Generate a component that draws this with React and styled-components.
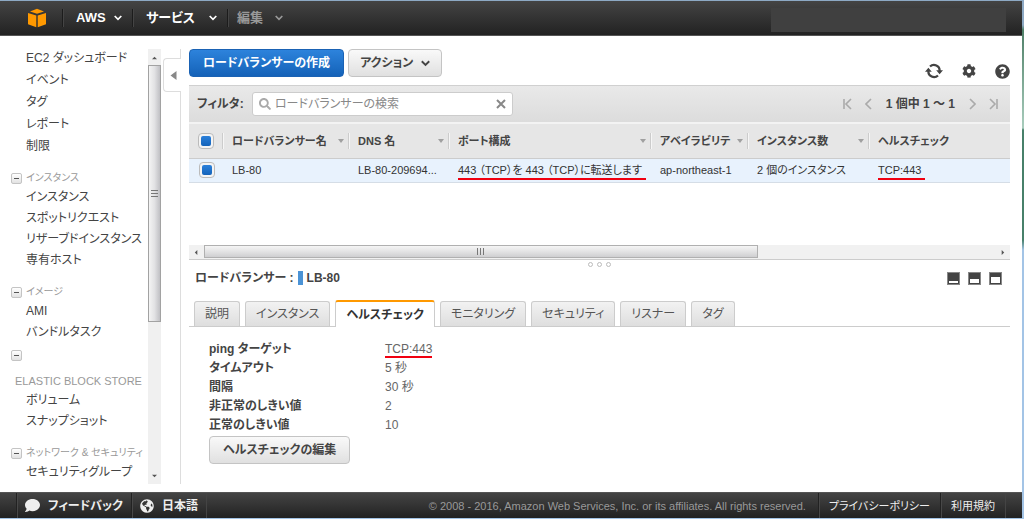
import React from "react";
import styled, { createGlobalStyle, css } from "styled-components";
import { FaCog, FaComment, FaGlobeAmericas, FaQuestionCircle, FaSearch } from "react-icons/fa";

const GlobalStyle = createGlobalStyle`
  *, *::before, *::after { box-sizing: border-box; }
  body { margin: 0; }
  body, button, input, table {
    font-family: "Liberation Sans", "Noto Sans CJK JP", sans-serif;
    font-size: 12px;
    line-height: 20px;
    font-feature-settings: "palt";
    color: #444;
  }
  button { margin: 0; padding: 0; border: 0; background: none; cursor: pointer; }
  a { color: inherit; text-decoration: none; }
  ul, h2, dl, dd { margin: 0; padding: 0; list-style: none; }
  svg { display: block; flex: none; }
`;

const Frame = styled.div`
  height: 100vh;
  padding: 1px 2px 1px 0;
  background: linear-gradient(#8da9c4 0 25px, #4f8068 30px, #a9cdbd 128px, #47806a 130px 240px, #a3c4e6 250px);
`;

const Page = styled.div`
  display: flex;
  flex-direction: column;
  height: 100%;
  background: #fff;
`;

const TopBar = styled.header`
  display: flex;
  align-items: center;
  flex: none;
  height: 35px;
  padding-right: 16px;
  background: linear-gradient(#444, #222);
  border-bottom: 1px solid #555;
`;

const Logo = styled.a`
  display: flex;
  padding: 0 15px 0 27px;
`;

const NavButton = styled.button`
  display: flex;
  align-items: center;
  justify-content: space-between;
  width: ${(p) => p.$width}px;
  height: 18px;
  padding: 0 10px 0 ${(p) => (p.$dim ? 9 : 13)}px;
  border-left: 1px solid #1c1c1c;
  box-shadow: inset 1px 0 #444;
  color: ${(p) => (p.$dim ? "#999" : "#fff")};
  font-size: 13px;
  font-weight: 700;
`;

const Account = styled.div`
  align-self: flex-end;
  width: 235px;
  height: 24px;
  margin: 0 0 3px auto;
  background: #404040;
`;

const Body = styled.div`
  display: flex;
  flex: 1;
  min-height: 0;
  padding-bottom: 8px;
`;

const Sidebar = styled.nav`
  flex: none;
  width: 148px;
  padding-top: 11px;
  overflow: hidden;
  white-space: nowrap;
`;

const SideList = styled.ul`
  padding-left: 26px;
  line-height: ${(p) => (p.$loose ? 22 : 21)}px;
`;

const Group = styled.section`
  margin-top: ${(p) => (p.$stacked ? 4 : 12)}px;
`;

const GroupHead = styled.div`
  display: flex;
  flex-direction: ${(p) => (p.$stacked ? "column" : "row")};
  align-items: ${(p) => (p.$stacked ? "flex-start" : "center")};
  gap: ${(p) => (p.$stacked ? 11 : 4)}px;
  padding: ${(p) => (p.$stacked ? "3px 0 0 11px" : "0 0 0 11px")};
`;

const GroupTitle = styled.h2`
  padding-left: ${(p) => (p.$stacked ? 4 : 0)}px;
  font-size: ${(p) => (p.$stacked ? 11 : 10)}px;
  font-weight: 400;
  line-height: 18px;
  color: #999;
`;

const Toggle = styled.button`
  display: flex;
  align-items: center;
  justify-content: center;
  flex: none;
  width: 11px;
  height: 11px;
  border: 1px solid #c4c4c4;
  border-radius: 2px;
  background: linear-gradient(#fff, #e2e2e2);
  &::after {
    content: "";
    width: 5px;
    height: 1px;
    background: #555;
  }
`;

const VScroll = styled.div`
  display: flex;
  flex-direction: column;
  align-items: center;
  flex: none;
  width: 13px;
  margin-top: 13px;
  background: #f0f0f0;
`;

const Arrow = styled.i`
  display: flex;
  align-items: center;
  justify-content: center;
  flex: none;
  width: ${(p) => p.$size || 16}px;
  height: ${(p) => p.$size || 16}px;
`;

const VThumb = styled.div`
  display: flex;
  align-items: center;
  justify-content: center;
  width: 13px;
  height: 59%;
  margin-bottom: auto;
  border: 1px solid #a2a2a2;
  background: linear-gradient(90deg, #f4f4f4, #e2e2e4 50%, #c0c0c4);
`;

const Grip = styled.i`
  width: 7px;
  height: 7px;
  background: repeating-linear-gradient(
    ${(p) => (p.$vertical ? "180deg" : "90deg")}, #777 0 1px, transparent 1px 3px
  );
`;

const Gutter = styled.div`
  display: flex;
  flex-direction: column;
  flex: none;
  width: 20px;
  padding-top: 13px;
`;

const GutterLine = styled.div`
  flex: ${(p) => (p.$rest ? "1" : "0 0 9px")};
  margin-left: 19px;
  border-left: 1px solid #ddd;
`;

const Collapse = styled.button`
  display: flex;
  align-items: center;
  height: 34px;
  padding-left: 5px;
  margin-left: 2px;
  border: 1px solid #ddd;
  border-right: 0;
  border-radius: 4px 0 0 4px;
`;

const Main = styled.main`
  flex: 1;
  min-width: 0;
  padding: 13px 12px 0 8px;
`;

const Toolbar = styled.div`
  display: flex;
  align-items: flex-start;
  gap: 4px;
  height: 36px;
`;

const Button = styled.button`
  display: flex;
  align-items: center;
  gap: 8px;
  height: 28px;
  padding: 0 ${(p) => (p.$menu ? 11 : 13)}px;
  border: 1px solid #c4c4c4;
  border-radius: 4px;
  background: linear-gradient(#f9f9f9, #e0e0e0);
  font-weight: 700;
  white-space: nowrap;
  ${(p) =>
    p.$primary &&
    css`
      border-color: #1a62b4;
      background: linear-gradient(#2d83dc, #1462b8);
      color: #fff;
    `}
`;

const ToolIcons = styled.div`
  display: flex;
  align-items: center;
  gap: 19px;
  margin: 14px 0 0 auto;
  button { color: #444; }
`;

const FilterBar = styled.div`
  display: flex;
  align-items: center;
  height: 37px;
  padding: 0 12px 0 8px;
  border-top: 1px solid #d0d0d0;
  background: linear-gradient(#e9e9e9, #dcdcdc);
  label { width: 55px; font-weight: 700; }
`;

const SearchBox = styled.div`
  display: flex;
  align-items: center;
  gap: 4px;
  width: 261px;
  height: 24px;
  padding: 0 6px;
  border: 1px solid #ccc;
  border-radius: 3px;
  background: #fff;
  color: #aaa;
`;

const SearchInput = styled.input`
  flex: 1;
  min-width: 0;
  padding: 0;
  border: 0;
  outline: 0;
  background: none;
  &::placeholder { color: #888; opacity: 1; }
`;

const Pager = styled.div`
  display: flex;
  align-items: center;
  gap: 13px;
  margin-left: auto;
  color: #aaa;
  strong { color: #444; }
`;

const TableArea = styled.div`
  height: 123px;
  overflow: hidden;
`;

const Table = styled.table`
  width: 100%;
  table-layout: fixed;
  border-collapse: collapse;
  white-space: nowrap;
  th { height: 35px; padding: 0; background: #e6e6e6; border-top: 2px solid #f3f3f3; border-bottom: 1px solid #ccc; font-size: 11px; text-align: left; }
  td { height: 24px; padding: 0 0 0 9px; background: #e8f2fd; border-bottom: 1px solid #d5dde6; font-size: 11px; line-height: 18px; color: #333; overflow: hidden; }
`;

const HeadCell = styled.div`
  display: flex;
  align-items: center;
  justify-content: space-between;
  height: 16px;
  padding: 0 5px 0 8px;
  border-left: 1px solid #f6f6f6;
  box-shadow: -1px 0 #ccc;
`;

const Caret = styled.i`
  border: 3px solid transparent;
  border-top: 4px solid #a0a0a0;
  border-bottom: 0;
`;

const CheckCell = styled.div`
  display: flex;
  padding-left: ${(p) => (p.$head ? 9 : 1)}px;
`;

const Check = styled.input.attrs({ type: "checkbox" })`
  appearance: none;
  width: 16px;
  height: 16px;
  margin: 0;
  border: 1px solid #bbb;
  border-radius: 4px;
  background: #f4f4f4;
  &:checked::before {
    content: "";
    display: block;
    width: 10px;
    height: 10px;
    margin: 2px;
    border-radius: 2px;
    background: linear-gradient(#2b80da, #1463ba);
  }
`;

const Marked = styled.span`
  display: inline-block;
  line-height: ${(p) => (p.$tight ? 13 : 15)}px;
  padding-right: ${(p) => (p.$tight ? 0 : 4)}px;
  border-bottom: 2px solid #f00010;
`;

const HScroll = styled.div`
  display: flex;
  height: 15px;
  padding-bottom: 1px;
  border-bottom: 1px solid #ccc;
  background: #f1f1f1;
`;

const HTrack = styled.div`
  flex: 1;
`;

const HThumb = styled.div`
  display: flex;
  align-items: center;
  justify-content: center;
  width: 70%;
  height: 13px;
  border: 1px solid #b0b0b0;
  background: linear-gradient(#f5f5f5, #e3e3e4 50%, #cfcfd1);
`;

const Dots = styled.div`
  display: flex;
  justify-content: center;
  gap: 4px;
  padding: 2px 0 1px;
  i { width: 5px; height: 5px; border: 1px solid #bbb; border-radius: 50%; }
`;

const DetailHead = styled.div`
  display: flex;
  align-items: center;
  height: 20px;
  padding: 0 8px 0 6px;
  h2 { font-size: 12px; line-height: 20px; font-weight: 700; }
`;

const Bar = styled.i`
  width: 5px;
  height: 14px;
  margin: 0 4px 0 4px;
  background: #4b93d6;
`;

const PaneButtons = styled.div`
  display: flex;
  gap: 8px;
  margin-left: auto;
`;

const Tabs = styled.div`
  display: flex;
  align-items: flex-end;
  gap: 5px;
  margin-top: 12px;
  padding-left: 5px;
  border-bottom: 1px solid #ccc;
`;

const Tab = styled.button`
  height: 25px;
  padding: 0 10px;
  border: 1px solid #ccc;
  border-bottom: 0;
  border-radius: 3px 3px 0 0;
  background: linear-gradient(#f2f2f2, #dedede);
  color: #555;
  white-space: nowrap;
  ${(p) =>
    p.$active &&
    css`
      height: 27px;
      margin-bottom: -1px;
      border-top: 2px solid #f90;
      background: #fff;
      color: #333;
      font-weight: 700;
    `}
`;

const Facts = styled.dl`
  display: grid;
  grid-template-columns: 176px 1fr;
  padding: 13px 0 1px 20px;
  line-height: 19px;
  dt { font-weight: 700; }
  dd { color: #666; }
`;

const Actions = styled.div`
  padding-left: 20px;
`;

const Footer = styled.footer`
  display: flex;
  align-items: center;
  flex: none;
  height: 26px;
  padding: 0 16px;
  background: linear-gradient(#444, #222);
  border-top: 1px solid #555;
  color: #999;
  font-size: 11px;
`;

const FootItem = styled.a`
  display: flex;
  align-items: center;
  gap: 8px;
  height: 25px;
  padding: 0 ${(p) => (p.$strong ? 8 : 10)}px;
  border-left: 1px solid #222;
  box-shadow: inset 1px 0 #484848;
  color: #eee;
  font-size: ${(p) => (p.$strong ? 12 : 11)}px;
  font-weight: ${(p) => (p.$strong ? 700 : 400)};
  &:last-child { border-right: 1px solid #444; }
`;

const FootLeft = styled.div`
  display: flex;
`;

const FootRight = styled.div`
  display: flex;
  align-items: center;
  margin-left: auto;
  small { margin-right: 12px; font-size: 11px; }
`;

const Chevron = ({ size = 8 }) => (
  <svg width={size} height={size} viewBox="0 0 8 8" fill="none" stroke="currentColor" strokeWidth="1.7">
    <path d="M.7 2L4 5.3 7.3 2" />
  </svg>
);

const Triangle = ({ d, size = 5, color = "#555" }) => (
  <svg width={size} height={size} viewBox="0 0 6 6" fill={color}>
    <path d={d} />
  </svg>
);

const Cube = () => (
  <svg width="20" height="20" viewBox="0 0 20 20" fill="#f90">
    <path d="M3 3.6l7-2.8 7 2.8-7 2.2z" />
    <path d="M1 5l8.3 2.4v11.8L1 16.2z" />
    <path d="M19 5l-8.3 2.4v11.8l8.3-3z" />
  </svg>
);

const Refresh = () => (
  <svg width="18" height="16" viewBox="0 0 18 16">
    <g fill="none" stroke="#444" strokeWidth="2.2">
      <path d="M5 3.6A5.6 5.6 0 0 1 14.6 8" />
      <path d="M13 12.4A5.6 5.6 0 0 1 3.4 8" />
    </g>
    <path d="M11.2 7.2H18l-3.4 4zM0 8.8h6.8L3.4 4.8z" fill="#444" />
  </svg>
);

const Pane = ({ top }) => (
  <svg width="13" height="13" viewBox="0 0 13 13">
    <rect x=".5" y=".5" width="12" height="12" fill="#444" stroke="#888" />
    <rect x="2" y={top} width="9" height={11 - top} fill="#fff" />
  </svg>
);

const PageArrow = ({ d, width = 8 }) => (
  <svg width={width} height="12" viewBox={`0 0 ${width} 12`} fill="none" stroke="currentColor" strokeWidth="1.6">
    <path d={d} />
  </svg>
);

const topLinks = ["EC2 ダッシュボード", "イベント", "タグ", "レポート", "制限"];
const groups = [
  { title: "インスタンス", items: ["インスタンス", "スポットリクエスト", "リザーブドインスタンス", "専有ホスト"] },
  { title: "イメージ", items: ["AMI", "バンドルタスク"] },
  { title: "ELASTIC BLOCK STORE", items: ["ボリューム", "スナップショット"], stacked: true },
  { title: "ネットワーク & セキュリティ", items: ["セキュリティグループ"] },
];
const columns = [
  ["ロードバランサー名", 126],
  ["DNS 名", 100],
  ["ポート構成", 202],
  ["アベイラビリテ", 97],
  ["インスタンス数", 121],
  ["ヘルスチェック"],
];
const tabs = ["説明", "インスタンス", "ヘルスチェック", "モニタリング", "セキュリティ", "リスナー", "タグ"];
const facts = [
  ["ping ターゲット", <Marked $tight>TCP:443</Marked>],
  ["タイムアウト", "5 秒"],
  ["間隔", "30 秒"],
  ["非正常のしきい値", "2"],
  ["正常のしきい値", "10"],
];

const Links = ({ items, loose }) => (
  <SideList $loose={loose}>
    {items.map((t) => (
      <li key={t}><a href="#">{t}</a></li>
    ))}
  </SideList>
);

export default function App() {
  return (
    <Frame>
      <GlobalStyle />
      <Page>
        <TopBar>
          <Logo href="#" aria-label="ホーム"><Cube /></Logo>
          <NavButton $width={70}>AWS <Chevron /></NavButton>
          <NavButton $width={95}>サービス <Chevron /></NavButton>
          <NavButton $width={66} $dim>編集 <Chevron /></NavButton>
          <Account />
        </TopBar>
        <Body>
          <Sidebar>
            <Links items={topLinks} loose />
            {groups.map((g) => (
              <Group key={g.title} $stacked={g.stacked}>
                <GroupHead $stacked={g.stacked}>
                  <Toggle aria-label={g.title} />
                  <GroupTitle $stacked={g.stacked}>{g.title}</GroupTitle>
                </GroupHead>
                <Links items={g.items} />
              </Group>
            ))}
          </Sidebar>
          <VScroll>
            <Arrow><Triangle d="M0 5h6L3 2z" /></Arrow>
            <VThumb><Grip $vertical /></VThumb>
            <Arrow><Triangle d="M0 1h6L3 4z" /></Arrow>
          </VScroll>
          <Gutter>
            <GutterLine />
            <Collapse aria-label="サイドバーを閉じる"><Triangle d="M5 0v6L1 3z" size={9} color="#888" /></Collapse>
            <GutterLine $rest />
          </Gutter>
          <Main>
            <Toolbar>
              <Button $primary>ロードバランサーの作成</Button>
              <Button $menu>アクション <Chevron size={9} /></Button>
              <ToolIcons>
                <button aria-label="更新"><Refresh /></button>
                <button aria-label="設定"><FaCog size={14} /></button>
                <button aria-label="ヘルプ"><FaQuestionCircle size={15} /></button>
              </ToolIcons>
            </Toolbar>
            <FilterBar>
              <label htmlFor="filter">フィルタ:</label>
              <SearchBox>
                <FaSearch size={12} />
                <SearchInput id="filter" placeholder="ロードバランサーの検索" />
                <button aria-label="クリア">
                  <svg width="10" height="10" viewBox="0 0 10 10" stroke="#888" strokeWidth="2"><path d="M1 1l8 8M9 1L1 9" /></svg>
                </button>
              </SearchBox>
              <Pager>
                <PageArrow width={9} d="M1 1v10M8 1L3 6l5 5" />
                <PageArrow d="M6 1L1 6l5 5" />
                <strong>1 個中 1 ～ 1</strong>
                <PageArrow d="M2 1l5 5-5 5" />
                <PageArrow width={9} d="M8 1v10M1 1l5 5-5 5" />
              </Pager>
            </FilterBar>
            <TableArea>
              <Table>
                <colgroup>
                  <col width="34" />
                  {columns.map(([name, width]) => <col key={name} width={width} />)}
                </colgroup>
                <thead>
                  <tr>
                    <th><CheckCell $head><Check aria-label="すべて選択" defaultChecked /></CheckCell></th>
                    {columns.map(([name, width]) => (
                      <th key={name}><HeadCell>{name}{width && <Caret />}</HeadCell></th>
                    ))}
                  </tr>
                </thead>
                <tbody>
                  <tr>
                    <td><CheckCell><Check aria-label="LB-80" defaultChecked /></CheckCell></td>
                    <td>LB-80</td>
                    <td>LB-80-209694...</td>
                    <td><Marked>443 （TCP）を 443 （TCP）に転送します</Marked></td>
                    <td>ap-northeast-1</td>
                    <td>2 個のインスタンス</td>
                    <td><Marked>TCP:443</Marked></td>
                  </tr>
                </tbody>
              </Table>
            </TableArea>
            <HScroll>
              <Arrow $size={15}><Triangle d="M4 0v6L1 3z" /></Arrow>
              <HTrack><HThumb><Grip /></HThumb></HTrack>
              <Arrow $size={15}><Triangle d="M2 0v6l3-3z" /></Arrow>
            </HScroll>
            <Dots><i /><i /><i /></Dots>
            <DetailHead>
              <h2>ロードバランサー :</h2>
              <Bar />
              <h2>LB-80</h2>
              <PaneButtons>
                <button aria-label="最小"><Pane top={9} /></button>
                <button aria-label="中"><Pane top={7} /></button>
                <button aria-label="最大"><Pane top={5} /></button>
              </PaneButtons>
            </DetailHead>
            <Tabs role="tablist">
              {tabs.map((t) => (
                <Tab key={t} role="tab" aria-selected={t === "ヘルスチェック"} $active={t === "ヘルスチェック"}>{t}</Tab>
              ))}
            </Tabs>
            <Facts>
              {facts.map(([k, v]) => (
                <React.Fragment key={k}><dt>{k}</dt><dd>{v}</dd></React.Fragment>
              ))}
            </Facts>
            <Actions><Button>ヘルスチェックの編集</Button></Actions>
          </Main>
        </Body>
        <Footer>
          <FootLeft>
            <FootItem href="#" $strong><FaComment size={15} />フィードバック</FootItem>
            <FootItem href="#" $strong><FaGlobeAmericas size={14} />日本語</FootItem>
          </FootLeft>
          <FootRight>
            <small>© 2008 - 2016, Amazon Web Services, Inc. or its affiliates. All rights reserved.</small>
            <FootItem href="#">プライバシーポリシー</FootItem>
            <FootItem href="#">利用規約</FootItem>
          </FootRight>
        </Footer>
      </Page>
    </Frame>
  );
}
